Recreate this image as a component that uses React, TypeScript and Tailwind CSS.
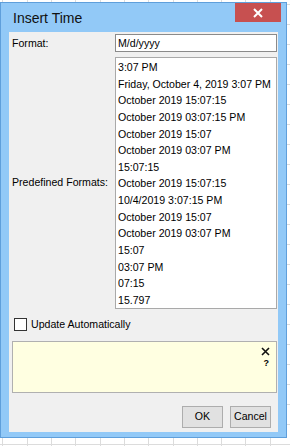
const formats = [
  "3:07 PM",
  "Friday, October 4, 2019 3:07 PM",
  "October 2019 15:07:15",
  "October 2019 03:07:15 PM",
  "October 2019 15:07",
  "October 2019 03:07 PM",
  "15:07:15",
  "October 2019 15:07:15",
  "10/4/2019 3:07:15 PM",
  "October 2019 15:07",
  "October 2019 03:07 PM",
  "15:07",
  "03:07 PM",
  "07:15",
  "15.797",
];

export default function App() {
  return (
    <div className="h-[446px] w-[290px] overflow-hidden bg-white bg-[image:repeating-linear-gradient(to_bottom,transparent_0_4px,#dcdcdc_4px_5px,transparent_5px_20px),repeating-linear-gradient(to_right,transparent_0_2.5px,#dcdcdc_2.5px_3.5px,transparent_3.5px_24.3px)] pt-[2px] font-['Liberation_Sans',Arial,sans-serif] text-black">
      <div className="flex h-[436px] w-[287px] flex-col border border-[#5f9fdb] bg-[#92c9f7] px-[8px] pb-[5px]">
        {/* title bar */}
        <div className="flex h-[29px] items-start justify-between">
          <span className="mt-[6px] pl-[4px] text-[14px] leading-[18px] text-[#111]">
            Insert Time
          </span>
          <button
            type="button"
            className="-mr-[3px] flex h-[19px] w-[46px] items-center justify-center bg-[#c75050]"
          >
            <svg width="10" height="10" viewBox="0 0 10 10">
              <path d="M1 1L9 9M9 1L1 9" stroke="white" strokeWidth="2" />
            </svg>
          </button>
        </div>

        {/* content */}
        <div className="flex h-[400px] flex-col bg-[#f0f0f0] pl-[3px] pr-[1px] text-[10.6px]">
          <div className="mt-[2px] grid grid-cols-[103px_1fr] items-center">
            <span className="leading-[18px]">Format:</span>
            <div className="h-[18px] border border-[#8a8a8a] bg-white pl-[2px] leading-[16px]">
              M/d/yyyy
            </div>
          </div>

          <div className="mt-[5px] grid grid-cols-[103px_1fr] items-center">
            <span>Predefined Formats:</span>
            <div className="h-[252px] border border-[#a9a9a9] bg-white pl-[2px] pt-[1px]">
              {formats.map((f, i) => (
                <div key={i} className="whitespace-nowrap leading-[16.64px]">
                  {f}
                </div>
              ))}
            </div>
          </div>

          <label className="mt-[8px] flex items-center gap-[4px] pl-[2px]">
            <span className="h-[13px] w-[13px] border border-[#333] bg-white" />
            <span className="leading-[14px]">Update Automatically</span>
          </label>

          <div className="mt-[10px] flex h-[52px] w-[265px] flex-col items-end border border-[#b0b0b0] bg-[#ffffe1] pr-[6px] pt-[5px]">
            <svg width="9" height="9" viewBox="0 0 9 9">
              <path d="M1 1L8 8M8 1L1 8" stroke="#111" strokeWidth="1.6" />
            </svg>
            <span className="mr-[1px] mt-[3px] text-[9px] font-bold leading-[9px]">?</span>
          </div>

          <div className="mt-[13px] flex justify-end gap-[7px] pr-[6px]">
            <button
              type="button"
              className="h-[22px] w-[41px] border border-[#adadad] bg-[#e1e1e1] text-[10.6px]"
            >
              OK
            </button>
            <button
              type="button"
              className="h-[22px] w-[41px] border border-[#adadad] bg-[#e1e1e1] text-[10.6px]"
            >
              Cancel
            </button>
          </div>
        </div>
      </div>
    </div>
  );
}
